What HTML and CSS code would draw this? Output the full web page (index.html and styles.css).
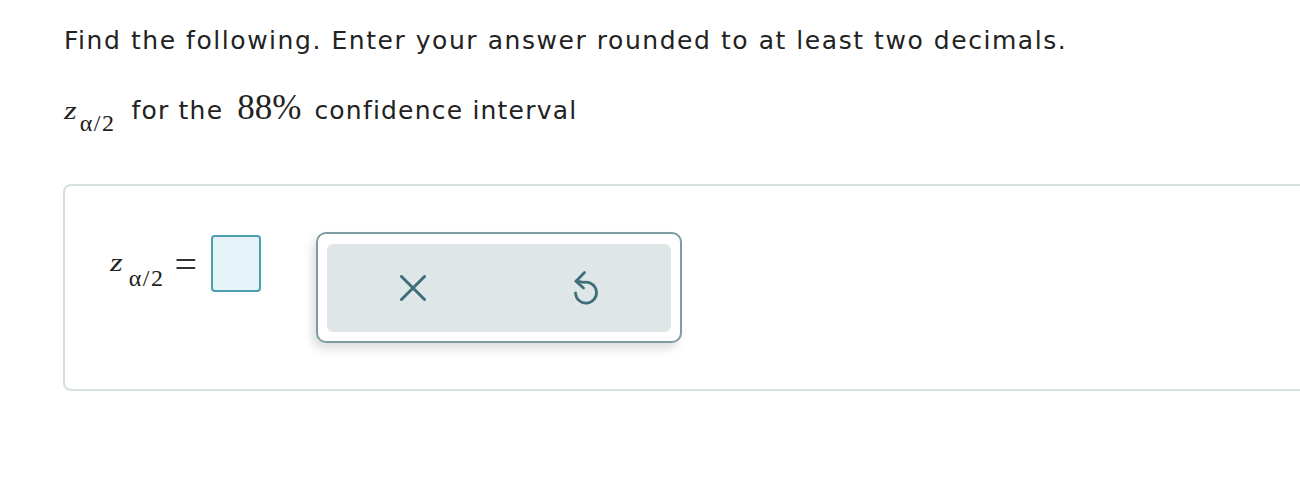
FILE: index.html
```html
<!DOCTYPE html>
<html>
<head>
<meta charset="utf-8">
<link rel="stylesheet" href="styles.css">
</head>
<body>
<div class="page">
  <p class="q">Find the following. Enter your answer rounded to at least two decimals.</p>
  <p class="q q2"><span class="m"><span class="mz">z</span><span class="ms">α/2</span></span><span class="txt">for the</span><span class="mn">88%</span><span class="txt">confidence interval</span></p>
  <div class="answer">
    <div class="eq">
      <span class="m eqm"><span class="mz">z</span><span class="ms">α/2</span></span>
      <span class="equals">=</span>
      <span class="inbox"></span>
    </div>
    <div class="tools">
      <div class="tools-inner">
        <button class="tb" aria-label="clear">
          <svg width="26" height="26" viewBox="0 0 26 26"><path d="M1.5 1.5 L24.5 24.5 M24.5 1.5 L1.5 24.5" stroke="#3f6e7a" stroke-width="3" stroke-linecap="round" fill="none"/></svg>
        </button>
        <button class="tb" aria-label="undo">
          <svg width="28" height="36" viewBox="0 0 28 36"><path d="M4.5 23 A10.5 10.5 0 1 0 13 12.3 L5 11.2" stroke="#3f6e7a" stroke-width="2.8" stroke-linecap="round" stroke-linejoin="round" fill="none"/><path d="M13.5 2.5 L5 11.2 L12.5 18" stroke="#3f6e7a" stroke-width="2.8" stroke-linecap="round" stroke-linejoin="round" fill="none"/></svg>
        </button>
      </div>
    </div>
  </div>
</div>
</body>
</html>
```
FILE: styles.css
```css
html, body { margin: 0; padding: 0; background: #fff; }
.page {
  padding: 22px 0 0 64px;
  font-family: "DejaVu Sans", Verdana, sans-serif;
  color: #222;
}
.q { margin: 0; font-size: 25px; line-height: 38px; letter-spacing: 1.55px; }
.q2 { margin-top: 32px; letter-spacing: 1.2px; }
.m { font-family: "Liberation Serif", "Times New Roman", serif; letter-spacing: 0; color: #222; line-height: 0; }
.mz {
  display: inline-block;
  font-style: italic;
  font-size: 25px;
  line-height: 0;
  transform: scaleX(1.3);
  transform-origin: left center;
  vertical-align: 0;
}
.ms { font-size: 24px; line-height: 0; vertical-align: -12px; margin-left: 6px; letter-spacing: 1.5px; }
.q2 .m { margin-right: 16px; }
.mn { font-family: "Liberation Serif", "Times New Roman", serif; font-size: 35px; line-height: 0; letter-spacing: 0; margin: 0 13px 0 14px; }
.answer {
  margin: 54px 0 0 -1px;
  height: 207px;
  border: 2px solid #d6e0e3;
  border-right: none;
  border-radius: 8px 0 0 8px;
  display: flex;
  align-items: flex-start;
  padding: 46px 0 0 45px;
  box-sizing: border-box;
}
.eq { display: flex; align-items: center; height: 57px; margin-top: 3px; }
.eqm { display: block; height: 57px; line-height: 57px; font-size: 27px; }
.eqm .mz { vertical-align: 1px; }
.eqm .ms { vertical-align: -14px; margin-left: 9px; }
.equals { font-family: "Liberation Serif", serif; font-size: 40px; line-height: 1; color: #333; margin: 3px 14px 0 10px; }
.inbox {
  width: 50px; height: 57px;
  box-sizing: border-box;
  border: 2px solid #4aa0b1;
  border-radius: 4px;
  background: #e6f3f8;
}
.tools {
  margin-left: 55px;
  width: 366px; height: 111px;
  box-sizing: border-box;
  border: 2px solid #7d9ca4;
  border-radius: 10px;
  background: #fff;
  padding: 10px 9px 9px;
  box-shadow: -4px 6px 10px rgba(0,0,0,0.13);
}
.tools-inner {
  height: 100%;
  background: #dfe6e8;
  border-radius: 6px;
  display: flex;
  align-items: center;
}
.tb { flex: 1; background: none; border: none; padding: 0; display: flex; justify-content: center; }
```
